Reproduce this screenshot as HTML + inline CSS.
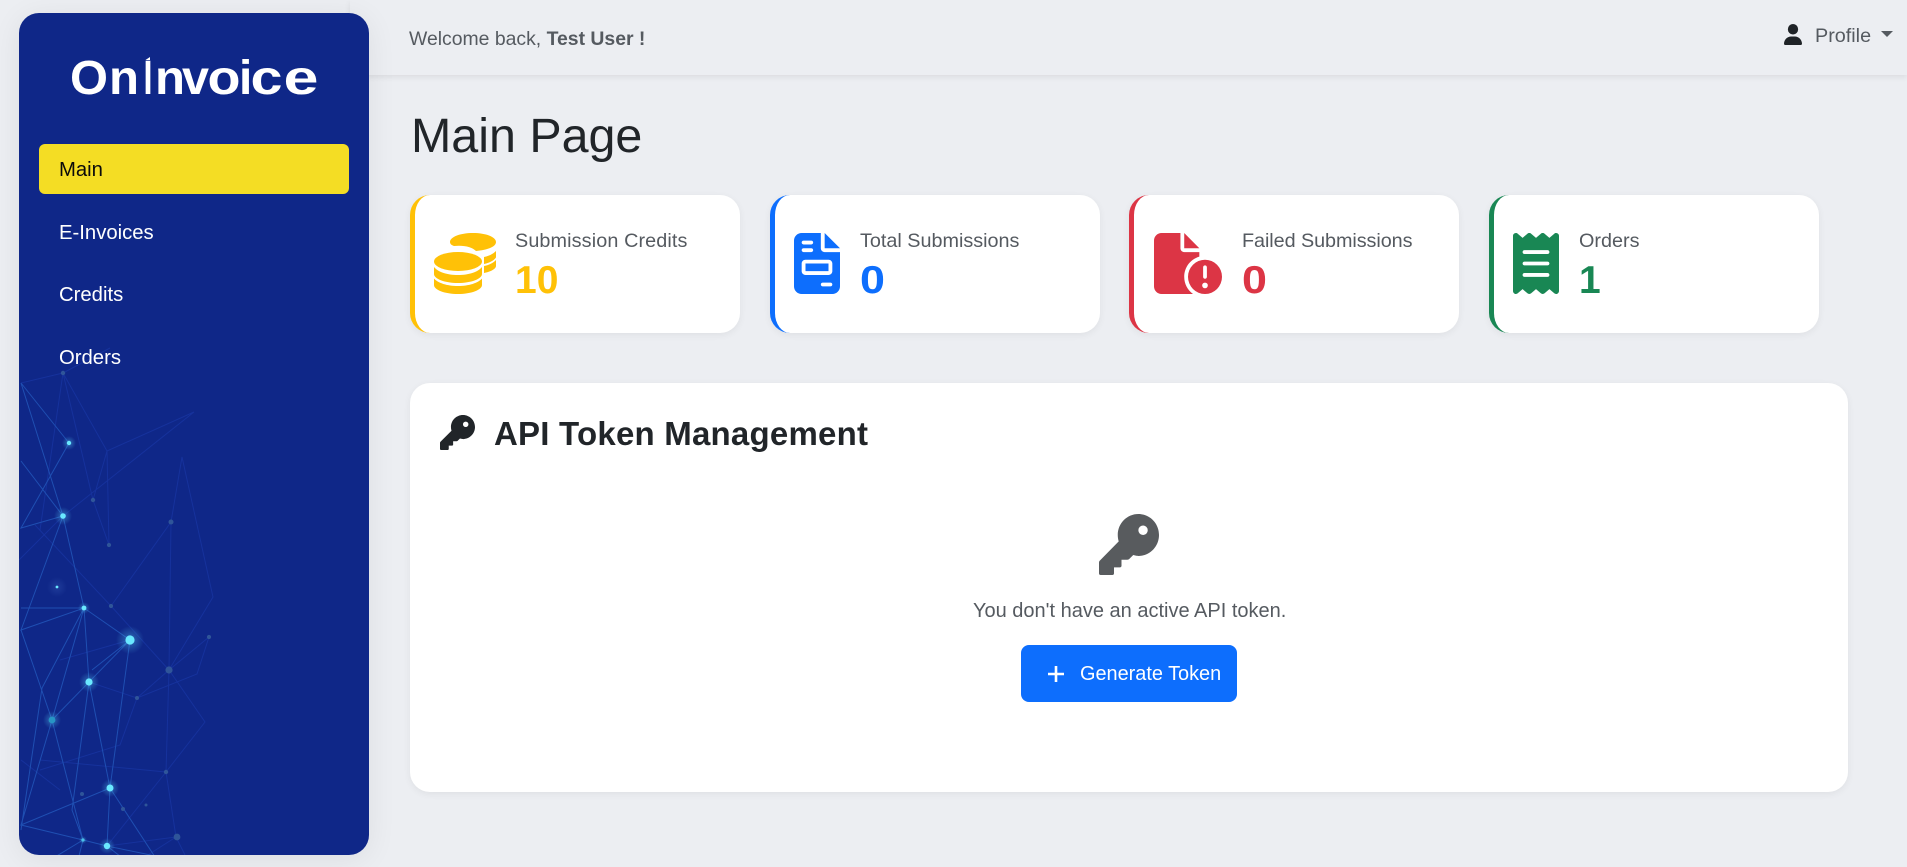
<!DOCTYPE html>
<html lang="en"><head><meta charset="utf-8"><title>OnInvoice</title>
<style>
html,body{margin:0;padding:0;width:1907px;height:867px;overflow:hidden;background:#eceef2;font-family:"Liberation Sans",sans-serif}
.a{position:absolute;white-space:nowrap}
.side{position:absolute;left:19px;top:13px;width:350px;height:842px;border-radius:20px;background:#0f2788;overflow:hidden;box-shadow:0 4px 30px rgba(0,0,0,.07)}
.top{position:absolute;left:350px;top:0;width:1557px;height:75px;background:#eceef2;box-shadow:0 2px 6px rgba(0,0,0,.08)}
.nav{position:absolute;left:59px;font-size:20.300px;line-height:24px;color:#fff;white-space:nowrap}
.card{position:absolute;top:195px;width:325px;height:138px;background:#fff;border-left:5px solid;border-radius:20px;box-shadow:0 2px 8px rgba(0,0,0,.06)}
.lbl{position:absolute;top:229px;font-size:19.800px;line-height:24px;color:#555a60;white-space:nowrap}
.val{position:absolute;top:259px;font-size:39px;line-height:44px;font-weight:bold;white-space:nowrap;transform-origin:0 50%}
svg{position:absolute;display:block}
</style></head><body>
<div class="top"></div>
<div class="side"></div>

<svg style="left:19px;top:13px" width="350" height="842" viewBox="19 13 350 842">
<defs>
<clipPath id="c"><rect x="19" y="13" width="350" height="842" rx="20"/></clipPath>
<radialGradient id="g"><stop offset="0" stop-color="#5fd8ff" stop-opacity=".4"/><stop offset="1" stop-color="#5fd8ff" stop-opacity="0"/></radialGradient>
<radialGradient id="h"><stop offset="0" stop-color="#5f8fe0" stop-opacity=".2"/><stop offset="1" stop-color="#5f8fe0" stop-opacity="0"/></radialGradient>
</defs>
<g clip-path="url(#c)" fill="none">
<g stroke="#16329c" stroke-width="1">
<path d="M63 373L21 383M63 373L110 348M63 373L93 500M63 373L107 451L194 412L63 516M107 451L93 500L109 545L107 451M63 373L40 530M63 516L19 560M35 525L111 606L171 522L182 457L213 597L169 670L171 522M111 606L169 670L209 637L197 674L137 698L169 670L205 722L166 772L169 670M137 698L89 682M169 670L137 698M166 772L176 837M166 772L107 846M40 760L166 772M40 770L120 745L137 698M176 837L107 846M130 640L60 660M60 790L21 760M176 837L185 855M140 860L176 837"/>
</g>
<g stroke="#1f4fb2" stroke-width="1">
<path d="M21 383L69 443L21 528L63 516L21 461M21 383L63 516L84 608L21 608M63 516L21 630L84 608L130 640L89 682L84 608L52 720M84 608L42 688L21 830M130 640L92 670M130 640L110 788L89 682L52 720L21 825L110 788L107 846L83 840L52 720M89 682L72 810L83 840M21 630L52 720M21 825L83 840M83 840L107 846L165 858M110 788L157 860M83 840L50 860M83 840L78 860M107 846L125 860"/>
</g>
<g stroke="none">
<circle cx="69" cy="443" r="7" fill="url(#g)"/><circle cx="69" cy="443" r="2.200" fill="#6ae8ff"/>
<circle cx="63" cy="516" r="9" fill="url(#g)"/><circle cx="63" cy="516" r="2.800" fill="#6ae8ff"/>
<circle cx="84" cy="608" r="6" fill="url(#g)"/><circle cx="84" cy="608" r="2.400" fill="#6ae8ff"/>
<circle cx="57" cy="587" r="10" fill="url(#h)"/><circle cx="57" cy="587" r="1.400" fill="#6ae8ff"/>
<circle cx="130" cy="640" r="14" fill="url(#g)"/><circle cx="130" cy="640" r="4.600" fill="#6ae8ff"/>
<circle cx="89" cy="682" r="10" fill="url(#g)"/><circle cx="89" cy="682" r="3.600" fill="#6ae8ff"/>
<circle cx="52" cy="720" r="9" fill="url(#g)"/><circle cx="52" cy="720" r="3.400" fill="#2795c4"/>
<circle cx="110" cy="788" r="9" fill="url(#g)"/><circle cx="110" cy="788" r="3.500" fill="#6ae8ff"/>
<circle cx="107" cy="846" r="8" fill="url(#g)"/><circle cx="107" cy="846" r="3.200" fill="#6ae8ff"/>
<circle cx="83" cy="840" r="4" fill="url(#g)"/><circle cx="83" cy="840" r="1.600" fill="#4cc0e8"/>
<g fill="#2f5599">
<circle cx="63" cy="373" r="2.200"/><circle cx="93" cy="500" r="2.200"/><circle cx="109" cy="545" r="2.100"/><circle cx="171" cy="522" r="2.500"/><circle cx="111" cy="606" r="2.100"/><circle cx="169" cy="670" r="3.600"/><circle cx="209" cy="637" r="2.100"/><circle cx="137" cy="698" r="2"/><circle cx="82" cy="794" r="2"/><circle cx="123" cy="809" r="2"/><circle cx="146" cy="805" r="1.500"/><circle cx="166" cy="772" r="2.200"/><circle cx="177" cy="837" r="3.400"/>
</g>
</g>
</g>
</svg>

<svg style="left:60px;top:50px" width="270" height="55" viewBox="60 50 270 55">
<g font-family="'Liberation Sans',sans-serif" font-weight="bold" font-size="48" fill="#fff">
<text x="70" y="94" textLength="38" lengthAdjust="spacingAndGlyphs">O</text>
<text x="109" y="94" textLength="30" lengthAdjust="spacingAndGlyphs">n</text>
<text x="143.500" y="94" textLength="9" lengthAdjust="spacingAndGlyphs">I</text>
<text x="155" y="94" textLength="30" lengthAdjust="spacingAndGlyphs">n</text>
<text x="182" y="94" textLength="27" lengthAdjust="spacingAndGlyphs">v</text>
<text x="207.500" y="94" textLength="33" lengthAdjust="spacingAndGlyphs">o</text>
<text x="239" y="94" textLength="13.300" lengthAdjust="spacingAndGlyphs">i</text>
<text x="250.500" y="94" textLength="32" lengthAdjust="spacingAndGlyphs">c</text>
<text x="283.500" y="94" textLength="35" lengthAdjust="spacingAndGlyphs">e</text>
</g>
<path d="M145.500 60L150 57V60Z" fill="#fff"/>
</svg>

<div class="a" style="left:39px;top:144px;width:310px;height:50px;background:#f4dd24;border-radius:6px"></div>
<div class="nav" style="top:158px;color:#0b0b0b">Main</div>
<div class="nav" style="top:221px">E-Invoices</div>
<div class="nav" style="top:283px">Credits</div>
<div class="nav" style="top:346px">Orders</div>

<div class="a" style="left:409px;top:27px;font-size:19.400px;line-height:24px;color:#555a60">Welcome back, <b>Test User !</b></div>
<svg style="left:1784px;top:24px" width="18" height="21" viewBox="0 0 448 512" preserveAspectRatio="none"><path fill="#1f2327" d="M224 256A128 128 0 1 0 224 0a128 128 0 1 0 0 256zm-45.700 48C79.800 304 0 383.800 0 482.300C0 498.700 13.300 512 29.700 512H418.300c16.400 0 29.700-13.300 29.700-29.700C448 383.800 368.200 304 269.700 304H178.300z"/></svg>
<div class="a" style="left:1815px;top:24px;font-size:19.800px;line-height:24px;color:#555a60">Profile</div>
<svg style="left:1881px;top:31px" width="12" height="6"><path d="M0 0H12L6 6Z" fill="#555a60"/></svg>

<div class="a" style="left:411px;top:107px;font-size:48.400px;line-height:58px;color:#212529">Main Page</div>

<div class="card" style="left:410px;border-color:#ffc107"></div>
<svg style="left:434px;top:233px" width="62" height="61" viewBox="0 0 62 61"><g fill="#ffc107">
<path d="M16 9C16 4 26 0 39 0S62 4 62 9S53 17 42 18C38 14 30 12 20 13C17 12 16 10.500 16 9Z"/>
<path d="M50 24C55 23 59 21 62 18V24C62 26 56 30 50 31Z"/>
<path d="M50 33C55 32 59 30 62 27V33C62 36 56 39 50 40Z"/>
<ellipse cx="24" cy="28.500" rx="24" ry="9.500"/>
<path d="M0 34C4 39 13 42 24 42S44 39 48 34V41C48 46 37 50 24 50S0 46 0 41Z"/>
<path d="M0 45.500C4 50 13 53 24 53S44 50 48 45.500V52C48 57 37 61 24 61S0 57 0 52Z"/>
</g></svg>
<div class="lbl" style="left:515px;letter-spacing:.12px">Submission Credits</div>
<div class="val" style="left:515px;color:#ffc107">10</div>

<div class="card" style="left:770px;border-color:#0d6efd"></div>
<svg style="left:794px;top:233px" width="46" height="61" viewBox="0 0 384 512" preserveAspectRatio="none"><path fill="#0d6efd" d="M64 0C28.700 0 0 28.700 0 64V448c0 35.300 28.700 64 64 64H320c35.300 0 64-28.700 64-64V160H256c-17.700 0-32-14.300-32-32V0H64zM256 0V128H384L256 0zM80 64h64c8.800 0 16 7.200 16 16s-7.200 16-16 16H80c-8.800 0-16-7.200-16-16s7.200-16 16-16zm0 64h64c8.800 0 16 7.200 16 16s-7.200 16-16 16H80c-8.800 0-16-7.200-16-16s7.200-16 16-16zm16 96H288c17.700 0 32 14.300 32 32v64c0 17.700-14.300 32-32 32H96c-17.700 0-32-14.300-32-32V256c0-17.700 14.300-32 32-32zm0 32v64H288V256H96zM240 416h64c8.800 0 16 7.200 16 16s-7.200 16-16 16H240c-8.800 0-16-7.200-16-16s7.200-16 16-16z"/></svg>
<div class="lbl" style="left:860px">Total Submissions</div>
<div class="val" style="left:860px;color:#0d6efd;transform:scaleX(1.15)">0</div>

<div class="card" style="left:1129px;border-color:#dc3545"></div>
<svg style="left:1154px;top:233px" width="68" height="61" viewBox="0 0 576 512" preserveAspectRatio="none"><path fill="#dc3545" d="M0 64C0 28.700 28.700 0 64 0H224V128c0 17.700 14.300 32 32 32H384v38.600C310.100 219.500 256 287.400 256 368c0 59.100 29.100 111.300 73.700 143.300c-3.200 .5-6.400 .7-9.700 .7H64c-35.300 0-64-28.700-64-64V64zm384 64H256V0L384 128zm-96 240a144 144 0 1 1 288 0 144 144 0 1 1 -288 0zm144 96a24 24 0 1 0 0-48 24 24 0 1 0 0 48zm0-192c-8.800 0-16 7.200-16 16v80c0 8.800 7.200 16 16 16s16-7.200 16-16V288c0-8.800-7.200-16-16-16z"/></svg>
<div class="lbl" style="left:1242px;letter-spacing:-.06px">Failed Submissions</div>
<div class="val" style="left:1242px;color:#dc3545;transform:scaleX(1.15)">0</div>

<div class="card" style="left:1489px;border-color:#198754"></div>
<svg style="left:1513px;top:233px" width="46" height="61" viewBox="0 0 384 512" preserveAspectRatio="none"><path fill="#198754" d="M14 2.200C22.500-1.700 32.500-.3 39.600 5.800L80 40.400 120.400 5.800c9-7.700 22.300-7.700 31.200 0L192 40.400 232.400 5.800c9-7.700 22.200-7.700 31.200 0L304 40.400 344.400 5.800c7.100-6.100 17.100-7.500 25.600-3.600s14 12.400 14 21.800V488c0 9.400-5.500 17.900-14 21.800s-18.500 2.500-25.600-3.600L304 471.600l-40.400 34.600c-9 7.700-22.300 7.700-31.200 0L192 471.600l-40.400 34.600c-9 7.700-22.200 7.700-31.200 0L80 471.600 39.600 506.200c-7.100 6.100-17.100 7.500-25.600 3.600S0 497.400 0 488V24C0 14.600 5.500 6.100 14 2.200zM96 144c-8.800 0-16 7.200-16 16s7.200 16 16 16H288c8.800 0 16-7.200 16-16s-7.200-16-16-16H96zM80 352c0 8.800 7.200 16 16 16H288c8.800 0 16-7.200 16-16s-7.200-16-16-16H96c-8.800 0-16 7.200-16 16zM96 240c-8.800 0-16 7.200-16 16s7.200 16 16 16H288c8.800 0 16-7.200 16-16s-7.200-16-16-16H96z"/></svg>
<div class="lbl" style="left:1579px">Orders</div>
<div class="val" style="left:1579px;color:#198754">1</div>

<div class="a" style="left:410px;top:383px;width:1438px;height:409px;background:#fff;border-radius:20px;box-shadow:0 2px 8px rgba(0,0,0,.06)"></div>
<svg style="left:440px;top:415px" width="35" height="35" viewBox="0 0 512 512"><path fill="#212529" d="M336 352c97.200 0 176-78.800 176-176S433.200 0 336 0S160 78.800 160 176c0 18.700 2.900 36.800 8.300 53.700L7 391c-4.500 4.500-7 10.600-7 17v90c0 8 6 14 14 14h100c8 0 14-6 14-14V448h50c8 0 14-6 14-14V384h50c6.400 0 12.500-2.500 17-7l33.300-33.300c16.900 5.400 35 8.300 53.700 8.300zM376 96a40 40 0 1 1 0 80 40 40 0 1 1 0-80z"/></svg>
<div class="a" style="left:494px;top:414px;font-size:33px;line-height:40px;font-weight:bold;letter-spacing:.22px;color:#212529">API Token Management</div>

<svg style="left:1099px;top:514px" width="60" height="61" viewBox="0 0 512 512" preserveAspectRatio="none"><path fill="#585b5e" d="M336 352c97.200 0 176-78.800 176-176S433.200 0 336 0S160 78.800 160 176c0 18.700 2.900 36.800 8.300 53.700L7 391c-4.500 4.500-7 10.600-7 17v90c0 8 6 14 14 14h100c8 0 14-6 14-14V448h50c8 0 14-6 14-14V384h50c6.400 0 12.500-2.500 17-7l33.300-33.300c16.900 5.400 35 8.300 53.700 8.300zM376 96a40 40 0 1 1 0 80 40 40 0 1 1 0-80z"/></svg>
<div class="a" style="left:973px;top:599px;font-size:20px;line-height:24px;color:#555a60">You don't have an active API token.</div>
<div class="a" style="left:1021px;top:645px;width:216px;height:57px;background:#0d6efd;border-radius:8px"></div>
<svg style="left:1048px;top:666px" width="16" height="16"><path d="M8 0V16M0 8H16" stroke="#fff" stroke-width="2.600" fill="none"/></svg>
<div class="a" style="left:1080px;top:662px;font-size:19.900px;line-height:24px;color:#fff">Generate Token</div>
</body></html>
